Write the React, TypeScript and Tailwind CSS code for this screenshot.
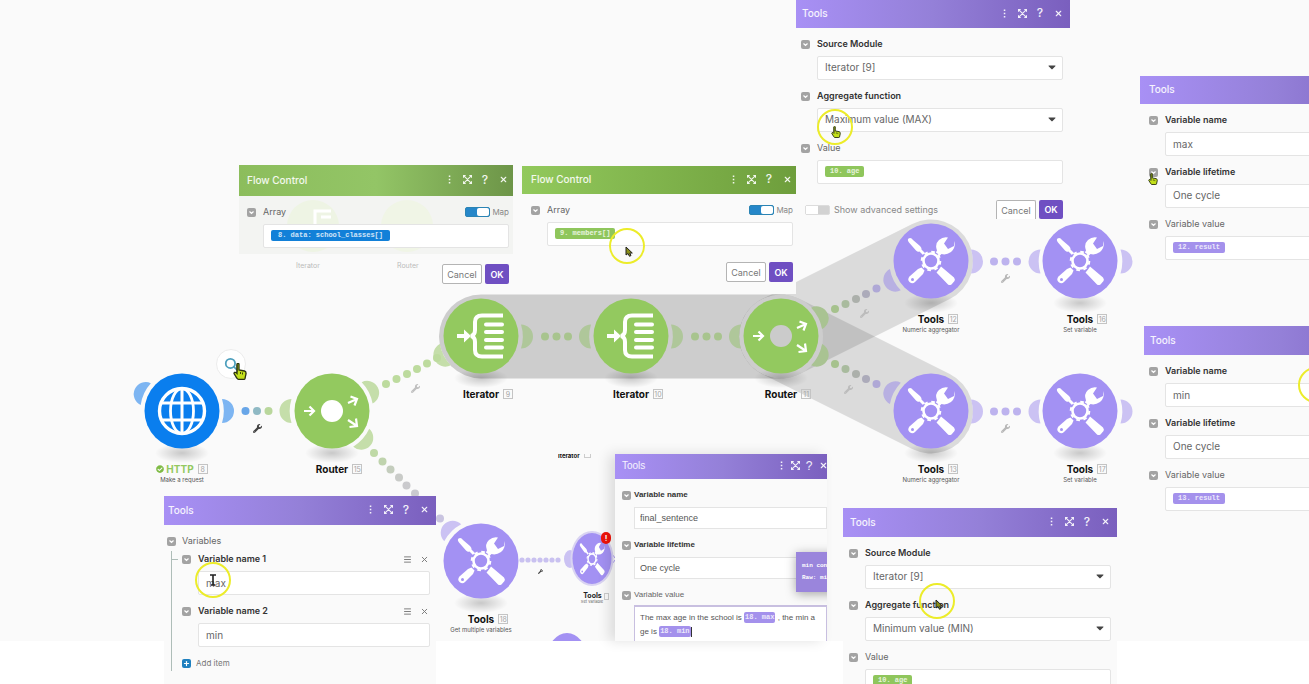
import React, { useId } from "react";
import { FaWrench, FaCheckCircle, FaCaretDown } from "react-icons/fa";
import { Search, X, Menu, Plus } from "lucide-react";

/* ---------- canvas drawings ---------- */

type Kind = "http" | "router" | "iterator" | "tools";

const GLOBE = "#0a7eee";
const GREEN = "#93c95f";
const PURPLE = "#a391f3";

function Glyph({ kind, hole = "#ffffff" }: { kind: Kind; hole?: string }) {
  if (kind === "http")
    return (
      <g fill="none" stroke="#fff" strokeWidth="3.4">
        <circle r="22.5" />
        <ellipse rx="11.5" ry="22.5" strokeWidth="2.8" />
        <path d="M0-22V22M-21-8H21M-21 9H21" strokeWidth="3" />
      </g>
    );
  if (kind === "router")
    return (
      <g fill="none" stroke="#fff" strokeWidth="2.2">
        <circle r="11" fill={hole} stroke="none" />
        <path d="M-28 0H-18M-22.500-4.500L-18 0L-22.500 4.500" />
        <path d="M16-8L25-12M18.500-14.500L25-12L22.500-5.500" />
        <path d="M16 9L25 15M24 7.500L25 15L17.500 16" />
      </g>
    );
  if (kind === "iterator")
    return (
      <g fill="none" stroke="#fff" strokeWidth="4">
        <path d="M22-20.500H1Q-6-20.500-6-14V-6Q-6-1-10 0Q-6 1-6 6V14Q-6 20.500 1 20.500H22" />
        <path d="M5-11.500H21M5-4H21M5 4H21M5 11.500H21" strokeLinecap="round" />
        <path d="M-24 0H-13" />
        <path d="M-17-6.500L-10 0L-17 6.500Z" fill="#fff" stroke="none" />
      </g>
    );
  return (
    <g fill="#fff">
      <path d="M-22.500-22.500Q-20-24-18-21L-11-15Q-9-13-9.500-11.500L-6-8L-8-6L-11.500-9.500Q-13-8.500-15-10.500L-22-18.500Q-24-21-22.500-22.500Z" />
      <path d="M17-23.500L13-17.500L17-12L23-15L23.500-20Q25-13 20-9Q15-5.500 10.500-7L8-4.500L4.500-8L6-10.500Q3.500-17 8-21Q12-24.500 17-23.500Z" />
      <path d="M10 5.500L23 16.500Q24.500 18.500 23.500 20L20.500 23.500Q18.500 24.500 17 23.500L5.500 11.500L8 8.500Z" />
      <path d="M-9.500 6.500L-6.500 9.500L-8 13L-16 21Q-18.500 23.500-21.500 21Q-24 18.500-21.500 15.500L-13 8Z" />
      <circle cx="-18.500" cy="18.500" r="1.500" fill={PURPLE} />
      <circle r="10" fill={PURPLE} />
      <circle r="7.500" fill="none" stroke="#fff" strokeWidth="2.600" />
      <circle r="9.300" fill="none" stroke="#fff" strokeWidth="2" strokeDasharray="3.650 3.650" />
    </g>
  );
}

type NodeProps = {
  place: string;
  kind: Kind;
  name: string;
  id: string;
  sub?: string;
  hole?: string;
};

function Module({ place, kind, name, id, sub, hole }: NodeProps) {
  const color = kind === "http" ? GLOBE : kind === "tools" ? PURPLE : GREEN;
  return (
    <div className={`absolute flex w-[76px] flex-col items-center ${place}`}>
      <svg viewBox="-38 -38 76 76" className="h-[76px] w-[76px] overflow-visible" aria-hidden="true">
        <defs>
          <radialGradient id={`sh${id}`}>
            <stop offset="0" stopColor="#000" stopOpacity=".2" />
            <stop offset="1" stopColor="#000" stopOpacity="0" />
          </radialGradient>
        </defs>
        <ellipse cy="42" rx="27" ry="10" fill={`url(#sh${id})`} />
        <circle r="37.5" fill={color} />
        <Glyph kind={kind} hole={hole} />
      </svg>
      <div
        className={`mt-[14px] flex h-3 items-center gap-1 whitespace-nowrap text-[10px] font-bold leading-3 ${
          kind === "http" ? "text-[#93c95f]" : "pl-[14px] text-[#111]"
        }`}
      >
        <span className="flex items-center gap-0.5">
          {kind === "http" && <FaCheckCircle size={8} color="#7fbb45" />}
          {name}
        </span>
        <span className="flex h-[10px] min-w-[10px] items-center justify-center border border-[#c4c4c4] text-[7px] font-normal leading-none text-[#a5a5a5]">
          {id}
        </span>
      </div>
      {sub && <div className="mt-px whitespace-nowrap text-[6px] leading-2 text-[#555]">{sub}</div>}
    </div>
  );
}

function Lobe({ x, y, a, fill }: { x: number; y: number; a: number; fill: string }) {
  return (
    <path
      d="M40-12A12 12 0 0 1 40 12A41 41 0 0 0 40-12Z"
      fill={fill}
      transform={`translate(${x} ${y}) rotate(${a})`}
    />
  );
}

const LB = "#7db5f2";
const LG = "#c5deaa";
const LP = "#cbc2f3";

const lobes: [number, number, number, string][] = [
  [182, 411, 205, LB],
  [182, 411, 0, LB],
  [331.5, 411, 180, LG],
  [331.5, 411, -27, LG],
  [331.5, 411, 42, LG],
  [481, 336.5, 153, LG],
  [481, 561, 225, LP],
  [931, 261.5, 0, LP],
  [931, 411.5, 0, LP],
  [1080.5, 261.5, 180, LP],
  [1080.5, 261.5, 0, LP],
  [1080.5, 411.5, 180, LP],
  [1080.5, 411.5, 0, LP],
];

const shaded: [number, number, number, string][] = [
  [481, 336.5, 0, "#afc79a"],
  [631, 336.5, 180, "#afc79a"],
  [631, 336.5, 0, "#afc79a"],
  [781, 336.5, 180, "#afc79a"],
  [781, 336.5, -27, "#a9c392"],
  [781, 336.5, 27, "#a9c392"],
  [931, 261.5, 153, "#b8b0e2"],
  [931, 411.5, 207, "#b8b0e2"],
];

const dots: [number, number, string][] = [
  [245.5, 411, "#68a6e8"],
  [257, 411, "#8fb9c4"],
  [268.5, 411, "#b9d79c"],
  [386, 384, "#bddb9e"],
  [396.5, 379, "#bddb9e"],
  [407, 374, "#bddb9e"],
  [417, 369, "#bddb9e"],
  [427, 363.5, "#bddb9e"],
  [437, 358, "#bddb9e"],
  [374, 453, "#bfd9a6"],
  [382.5, 461.5, "#bfd3ad"],
  [390.5, 469.5, "#c4cdbd"],
  [399, 477.5, "#c9cbc8"],
  [406.5, 485.5, "#cacacd"],
  [415, 493.5, "#cacacf"],
  [440, 518.5, "#c9c4e0"],
  [545, 336.5, "#a8c48e"],
  [556.5, 336.5, "#a8c48e"],
  [568, 336.5, "#a8c48e"],
  [695, 336.5, "#a8c48e"],
  [706.5, 336.5, "#a8c48e"],
  [718, 336.5, "#a8c48e"],
  [835, 309, "#a6c28d"],
  [845.5, 304, "#a9bb9e"],
  [856, 299, "#acb0ab"],
  [866, 294, "#acabba"],
  [876.5, 288.5, "#afa8d6"],
  [835, 364, "#a6c28d"],
  [845.5, 369, "#a9bb9e"],
  [856, 374, "#acb0ab"],
  [866, 379, "#acabba"],
  [876.5, 384, "#afa8d6"],
  [994, 261.5, "#bdb3ee"],
  [1005.5, 261.5, "#bdb3ee"],
  [1017, 261.5, "#bdb3ee"],
  [994, 411.5, "#bdb3ee"],
  [1005.5, 411.5, "#bdb3ee"],
  [1017, 411.5, "#bdb3ee"],
];

const smallDots = [522, 528, 534, 540, 546, 552, 558];

function Connections() {
  return (
    <svg className="absolute left-0 top-0 h-[641px] w-[1309px]" viewBox="0 0 1309 641" aria-hidden="true">
      <defs>
        <mask id="branch" maskUnits="userSpaceOnUse" x="0" y="0" width="1309" height="641">
          <rect width="1309" height="641" fill="#fff" />
          <circle cx="781" cy="336.500" r="42" fill="#000" />
        </mask>
      </defs>
      <g stroke="#000" strokeWidth="84" strokeLinecap="round">
        <path d="M481 336.500H781" strokeOpacity=".18" />
        <g mask="url(#branch)">
          <path d="M781 336.500L931 261.500" strokeOpacity=".12" />
          <path d="M781 336.500L931 411.500" strokeOpacity=".12" />
        </g>
      </g>
      {[...lobes, ...shaded].map(([x, y, a, f], i) => (
        <Lobe key={i} x={x} y={y} a={a} fill={f} />
      ))}
      {dots.map(([x, y, f], i) => (
        <circle key={i} cx={x} cy={y} r="4" fill={f} />
      ))}
      {smallDots.map((x) => (
        <circle key={x} cx={x} cy="560" r="2.6" fill="#c9c1f0" />
      ))}
      <ellipse cx="570" cy="559" rx="6" ry="9" fill={LP} />
      <path d="M611 553L616 559L611 565" fill="none" stroke={PURPLE} />
      <ellipse cx="592" cy="558.500" rx="21.500" ry="27.500" fill="#d9d3f2" />
      <ellipse cx="592" cy="558.500" rx="19.500" ry="25.500" fill={PURPLE} />
      <g transform="translate(592 559) scale(.53 .68)">
        <Glyph kind="tools" />
      </g>
      <ellipse cx="567" cy="659" rx="20" ry="26" fill={PURPLE} />
    </svg>
  );
}

/* ---------- pointers ---------- */

const Ring = ({ place }: { place: string }) => (
  <div className={`pointer-events-none absolute h-9 w-9 rounded-full border-2 border-[#ecec2a] ${place}`} />
);

const Hand = ({ place }: { place: string }) => (
  <svg viewBox="0 0 14 17" className={`pointer-events-none absolute ${place}`} aria-hidden="true">
    <path
      d="M4 1Q5-.2 6 1V7L11.500 8Q13.400 8.500 13 11L12 15.500Q11.800 16.300 11 16.300H5.500Q4.500 16.300 4 15.300L1 10.500Q1 8.800 3 9.500L4 10.500Z"
      fill="#c3e01a"
      stroke="#2c3310"
      strokeWidth="1.300"
    />
    <path d="M4 1.500V9M7.500 9V11M9.500 9.500V11.500" stroke="#2c3310" strokeWidth=".9" />
  </svg>
);

const Arrow = ({ place }: { place: string }) => (
  <svg viewBox="0 0 8 11" className={`pointer-events-none absolute h-[11px] w-2 ${place}`} aria-hidden="true">
    <path d="M1 1V9L3 7.500L4.500 10.300L6 9.500L4.800 7H7.300Z" fill="#8a8f18" stroke="#222" />
  </svg>
);

/* ---------- panel parts ---------- */

const Expand = ({ size }: { size: number }) => (
  <svg viewBox="0 0 10 10" width={size} height={size} fill="none" stroke="currentColor" strokeWidth="1.200">
    <path d="M.6 3V.6H3M7 .6H9.400V3M9.400 7V9.400H7M3 9.400H.6V7M1 1L9 9M9 1L1 9" />
  </svg>
);

const Dots = ({ size }: { size: number }) => (
  <svg viewBox="0 0 10 10" width={size} height={size} fill="currentColor">
    <path d="M4.200 .6h1.700v1.700H4.200zM4.200 4.200h1.700v1.700H4.200zM4.200 7.800h1.700v1.700H4.200z" />
  </svg>
);

type HeaderProps = { title: string; pad: string; tone: string; cell?: string; bare?: boolean };

function Header({ title, pad, tone, cell = "w-[18px]", bare }: HeaderProps) {
  const btn = `flex items-center justify-center ${cell}`;
  return (
    <header className={`flex items-center justify-between pb-0.5 text-white/90 ${pad} ${tone}`}>
      <h2 className="text-[10px] font-medium leading-4">{title}</h2>
      {!bare && (
        <div className="flex items-center">
          <button className={btn} aria-label="More"><Dots size={9} /></button>
          <button className={btn} aria-label="Expand"><Expand size={9} /></button>
          <button className={`${btn} text-[12px] font-medium leading-none`} aria-label="Help">?</button>
          <button className={btn} aria-label="Close"><X size={9} strokeWidth={3} /></button>
        </div>
      )}
    </header>
  );
}

const VIOLET = "bg-linear-to-r from-[#a890f5] via-[#9480d8] to-[#7a5fbe]";
const LEAF = "bg-linear-to-r from-[#92c95c] to-[#6e9e3c]";

const Tick = () => (
  <span className="flex h-[9px] w-[9px] shrink-0 items-center justify-center rounded-xs bg-[#a3a3a3]">
    <svg viewBox="0 0 7 7" className="h-[7px] w-[7px]" fill="none" stroke="#fff" strokeWidth="1.200" aria-hidden="true">
      <path d="M1.500 2.500L3.500 4.500L5.500 2.500" />
    </svg>
  </span>
);

const Chip = ({ children, tone, pad = "px-[5px]" }: { children: React.ReactNode; tone: string; pad?: string }) => (
  <span
    className={`inline-flex h-[11px] items-center rounded-xs align-middle font-['Liberation_Mono',monospace] text-[7px] font-bold leading-none whitespace-pre text-white/80 ${pad} ${tone}`}
  >
    {children}
  </span>
);

const BOX = "h-6 w-full rounded-xs border border-[#e4e4e4] bg-white px-[7px] pb-px text-[10px] text-[#666] outline-none";

type FieldProps = {
  label: string;
  strong?: boolean;
  side?: React.ReactNode;
  value?: string;
  options?: string[];
  chip?: React.ReactNode;
  box?: string;
  gap?: string;
};

function Field({ label, strong, side, value, options, chip, box = BOX, gap = "gap-x-[7px]" }: FieldProps) {
  const id = useId();
  return (
    <div className={`grid grid-cols-[9px_1fr] items-center gap-y-1 ${gap}`}>
      <Tick />
      <div className="flex h-4 items-center justify-between">
        <label
          id={`${id}l`}
          htmlFor={chip ? undefined : id}
          className={`whitespace-nowrap leading-4 ${strong ? "font-semibold text-[#333]" : "text-[#666]"}`}
        >
          {label}
        </label>
        {side}
      </div>
      <div className="relative col-start-2">
        {chip ? (
          <div role="textbox" aria-labelledby={`${id}l`} className={`flex items-center ${box}`}>
            {chip}
          </div>
        ) : options ? (
          <>
            <select id={id} className={`appearance-none ${box}`}>
              {options.map((o) => (
                <option key={o}>{o}</option>
              ))}
            </select>
            <FaCaretDown size={12} color="#444" className="pointer-events-none absolute right-[5px] top-[5px]" />
          </>
        ) : (
          <input id={id} defaultValue={value} className={box} />
        )}
      </div>
    </div>
  );
}

function MapToggle() {
  return (
    <label className="flex items-center gap-0.5 text-[8px] text-[#888]">
      <input type="checkbox" defaultChecked className="peer sr-only" />
      <span className="flex h-[10px] w-[25px] justify-end rounded-xs border border-[#2b84b4] bg-[#2687c9]">
        <span className="h-2 w-3 rounded-xs bg-white" />
      </span>
      Map
    </label>
  );
}

function Actions({ cut }: { cut?: boolean }) {
  return (
    <div className="flex justify-end gap-[3px] text-[9px] leading-none">
      <button
        className={`w-10 rounded-xs border border-[#b4b4b4] bg-white text-[#777] ${cut ? "h-[19px] rounded-b-none border-b-0" : "h-5"}`}
      >
        Cancel
      </button>
      <button className={`w-6 rounded-xs bg-[#6f4fc2] font-semibold text-white ${cut ? "h-[19px]" : "h-5"}`}>OK</button>
    </div>
  );
}

const RowTools = () => (
  <span className="flex items-center gap-2 pr-px text-[#777]">
    <button aria-label="Reorder"><Menu size={9} strokeWidth={2.5} /></button>
    <button aria-label="Remove"><X size={9} strokeWidth={2.5} /></button>
  </span>
);

const PANEL = "absolute flex flex-col bg-[#fafafa] text-[9px]";
const GCHIP = "bg-[#8fc65c]";
const PCHIP = "bg-[#a491ec]";
const NARROW =
  "h-[22px] w-full border border-[#e4e4e4] bg-white px-[5px] text-[9px] text-[#555] outline-none";

export default function App() {
  return (
    <main className="relative h-screen overflow-hidden bg-white font-['Inter','Liberation_Sans',sans-serif]">
      <section aria-label="Scenario" className="relative h-[641px] overflow-hidden bg-[#fafafa]">
        <Connections />
        <Module place="left-[144px] top-[373px]" kind="http" name="HTTP" id="8" sub="Make a request" />
        <Module place="left-[294px] top-[373px]" kind="router" name="Router" id="15" />
        <Module place="left-[443px] top-[298px]" kind="iterator" name="Iterator" id="9" />
        <Module place="left-[593px] top-[298px]" kind="iterator" name="Iterator" id="10" />
        <Module place="left-[743px] top-[298px]" kind="router" name="Router" id="11" hole="#cbcbcb" />
        <Module place="left-[893px] top-[223px]" kind="tools" name="Tools" id="12" sub="Numeric aggregator" />
        <Module place="left-[893px] top-[373px]" kind="tools" name="Tools" id="13" sub="Numeric aggregator" />
        <Module place="left-[1042px] top-[223px]" kind="tools" name="Tools" id="16" sub="Set variable" />
        <Module place="left-[1042px] top-[373px]" kind="tools" name="Tools" id="17" sub="Set variable" />
        <Module place="left-[443px] top-[523px]" kind="tools" name="Tools" id="18" sub="Get multiple variables" />

        <div className="absolute left-[572px] top-[592px] flex w-[40px] flex-col items-center">
          <span className="flex items-center gap-0.5 pl-2 text-[7px] font-bold leading-2 text-[#222]">
            Tools
            <span className="h-[7px] w-[5px] border border-[#ccc]" />
          </span>
          <span className="whitespace-nowrap text-[4px] leading-1 text-[#666]">Set variable</span>
        </div>
        <div className="absolute left-[601px] top-[532px] flex h-3 w-[10px] items-center justify-center rounded-full bg-[#f0140a] text-[8px] font-bold text-white">
          !
        </div>
        <div className="absolute left-[558px] top-[454px] flex h-1 items-end gap-1 overflow-hidden text-[6px] font-bold leading-[5px] text-[#111]">
          Iterator
          <span className="h-1 w-[7px] border border-t-0 border-[#ccc]" />
        </div>

        <FaWrench size={9} color="#444" className="absolute left-[253px] top-[424px]" />
        <FaWrench size={9} color="#c0c0c0" className="absolute left-[411px] top-[384px]" />
        <FaWrench size={9} color="#bcbcbc" className="absolute left-[860px] top-[309px]" />
        <FaWrench size={9} color="#bcbcbc" className="absolute left-[844px] top-[385px]" />
        <FaWrench size={9} color="#b8b8b8" className="absolute left-[1001px] top-[274px]" />
        <FaWrench size={9} color="#b8b8b8" className="absolute left-[1001px] top-[424px]" />
        <FaWrench size={5} color="#444" className="absolute left-[538px] top-[569px]" />

        <button
          aria-label="Inspect"
          className="absolute left-[216px] top-[349px] flex h-[30px] w-[30px] items-center justify-center rounded-full border border-[#ececec] bg-white text-[#4d9fbd]"
        >
          <Search size={14} strokeWidth={3} />
        </button>
        <Hand place="left-[233px] top-[363px] h-[17px] w-[14px]" />
      </section>

      {/* Flow Control: school classes */}
      <section className={`${PANEL} left-[239px] top-[165px] w-[274px]`}>
        <Header
          title="Flow Control"
          pad="h-[31px] pl-2 pr-px"
          tone="bg-linear-to-r from-[#8cbd5c] via-[#93c566] to-[#6d9548]"
        />
        <div className="relative bg-[#f3f4f2] pb-1.5 pl-2 pr-1 pt-2">
          <svg viewBox="0 0 274 58" className="absolute inset-0 h-[58px] w-[274px]" aria-hidden="true">
            <circle cx="74" cy="30" r="26" fill="#eef4e4" />
            <circle cx="168" cy="30" r="26" fill="#f0f5e6" />
            <path d="M92 15H76V28M82 21H92" fill="none" stroke="#fff" strokeWidth="3" />
          </svg>
          <div className="relative">
            <Field label="Array" side={<MapToggle />} chip={<Chip tone="bg-[#1280d8]" pad="px-[7px]">8. data: school_classes[]</Chip>} />
          </div>
        </div>
        <div className="relative pb-1.5 pr-1 pt-[10px]">
          <Actions />
          <span className="absolute left-[57px] top-2 text-[7px] leading-2 text-[#bbb]">Iterator</span>
          <span className="absolute left-[158px] top-2 text-[7px] leading-2 text-[#bbb]">Router</span>
        </div>
      </section>

      {/* Flow Control: members */}
      <section className={`${PANEL} left-[522px] top-[166px] w-[274px]`}>
        <Header title="Flow Control" pad="h-7 pl-[9px]" tone={LEAF} />
        <div className="flex flex-col gap-4 pb-3 pl-[9px] pr-[3px] pt-2">
          <Field label="Array" side={<MapToggle />} chip={<Chip tone={GCHIP}>9. members[]</Chip>} />
          <Actions />
        </div>
      </section>

      {/* Maximum aggregator */}
      <section className={`${PANEL} left-[796px] top-0 w-[274px]`}>
        <Header title="Tools" pad="h-7 pl-1.5 pr-[3px]" tone={VIOLET} />
        <div className="flex flex-col gap-2 pl-[5px] pr-[7px] pt-2">
          <Field label="Source Module" strong options={["Iterator [9]"]} />
          <Field label="Aggregate function" strong options={["Maximum value (MAX)"]} />
          <Field label="Value" chip={<Chip tone={GCHIP}>10. age</Chip>} />
          <div className="mt-2 flex items-center justify-between pl-1">
            <label className="flex items-center gap-1 text-[9px] text-[#888]">
              <input type="checkbox" className="sr-only" />
              <span className="flex h-[10px] w-[25px] rounded-xs border border-[#dcdcdc] bg-[#d2d2d2]">
                <span className="h-2 w-3 bg-white" />
              </span>
              Show advanced settings
            </label>
            <Actions cut />
          </div>
        </div>
      </section>

      {/* Set variable: max */}
      <section className={`${PANEL} left-[1140px] top-[76px] w-[274px] pb-4`}>
        <Header title="Tools" pad="h-7 pl-[9px]" tone={VIOLET} bare />
        <div className="flex flex-col gap-2 pl-[9px] pt-2">
          <Field label="Variable name" strong value="max" />
          <Field label="Variable lifetime" strong options={["One cycle"]} />
          <Field label="Variable value" chip={<Chip tone={PCHIP}>12. result</Chip>} />
        </div>
      </section>

      {/* Set variable: min */}
      <section className={`${PANEL} left-[1144px] top-[326px] w-[274px] pb-4`}>
        <Header title="Tools" pad="h-[29px] pl-1.5" tone={VIOLET} bare />
        <div className="flex flex-col gap-2 pl-[5px] pt-2">
          <Field label="Variable name" strong value="min" />
          <Field label="Variable lifetime" strong options={["One cycle"]} />
          <Field label="Variable value" chip={<Chip tone={PCHIP}>13. result</Chip>} />
        </div>
      </section>

      {/* Get multiple variables */}
      <section className={`${PANEL} left-[164px] top-[496px] w-[272px] pb-4`}>
        <Header title="Tools" pad="h-[29px] pl-1 pr-[3px]" tone={VIOLET} />
        <div className="pl-[3px] pr-1.5 pt-2">
          <div className="flex h-4 items-center gap-1.5 text-[#666]">
            <Tick />
            Variables
          </div>
          <div className="ml-1 mt-0.5 flex flex-col gap-2 border-l border-[#aebdb8] pl-[10px]">
            <div className="relative">
              <span className="absolute -left-[10px] top-2 h-px w-1.5 bg-[#aebdb8]" />
              <Field label="Variable name 1" strong value="max" side={<RowTools />} />
            </div>
            <Field label="Variable name 2" strong value="min" side={<RowTools />} />
            <button className="flex h-4 items-center gap-[5px] text-[8px] text-[#777]">
              <span className="flex h-[9px] w-[9px] items-center justify-center rounded-xs bg-[#1f80bf] text-white">
                <Plus size={7} strokeWidth={4} />
              </span>
              Add item
            </button>
          </div>
        </div>
      </section>

      {/* Set variable: final sentence */}
      <section className="absolute left-[615px] top-[454px] flex h-[187px] w-[212px] flex-col overflow-hidden bg-[#fafafa] font-['Liberation_Sans',sans-serif] text-[8px] shadow-[-6px_0_12px_rgba(0,0,0,0.12)]">
        <Header title="Tools" pad="h-[25px] shrink-0 pl-[7px] -mr-[3px]" tone={VIOLET} cell="w-[14px]" />
        <div className="flex flex-col gap-2 pl-[7px] pt-2">
          <Field label="Variable name" strong value="final_sentence" box={NARROW} gap="gap-x-[3px]" />
          <Field label="Variable lifetime" strong value="One cycle" box={NARROW} gap="gap-x-[3px]" />
          <div className="grid grid-cols-[9px_1fr] items-center gap-x-[3px]">
            <Tick />
            <span id="sentence" className="leading-4 text-[#666]">Variable value</span>
            <div
              role="textbox"
              aria-labelledby="sentence"
              className="col-start-2 mt-0.5 h-12 whitespace-nowrap border border-t-2 border-[#c8bfe0] bg-white px-[5px] pt-1 text-[8px] leading-[14px] text-[#555]"
            >
              The max age in the school is <Chip tone={PCHIP} pad="px-px">18. max</Chip> , the min a
              <br />
              ge is <Chip tone={PCHIP} pad="px-px">18. min</Chip>
              <span className="inline-block h-[10px] w-px bg-[#333] align-middle" />
            </div>
          </div>
        </div>
        <div className="absolute left-[181px] top-[98px] flex h-10 w-12 flex-col justify-center bg-[#9a85dc] pl-1.5 font-['Liberation_Mono',monospace] text-[6px] font-bold leading-3 whitespace-nowrap text-white shadow-[0_2px_10px_rgba(0,0,0,0.35)]">
          <span>min con</span>
          <span>Raw: min</span>
        </div>
      </section>

      {/* Minimum aggregator */}
      <section className={`${PANEL} left-[843px] top-[508px] w-[274px]`}>
        <Header title="Tools" pad="h-[29px] pl-[7px] pr-[3px]" tone={VIOLET} />
        <div className="flex flex-col gap-2 pl-1.5 pr-[6px] pt-2">
          <Field label="Source Module" strong options={["Iterator [9]"]} />
          <Field label="Aggregate function" strong options={["Minimum value (MIN)"]} />
          <Field label="Value" chip={<Chip tone={GCHIP}>10. age</Chip>} />
        </div>
      </section>

      <Ring place="left-[609px] top-[228px]" />
      <Arrow place="left-[625px] top-[246px]" />
      <Ring place="left-[817px] top-[109px]" />
      <Hand place="left-[831px] top-[126px] h-3 w-[10px]" />
      <Hand place="left-[1148px] top-[173px] h-3 w-[10px]" />
      <Ring place="left-[1298px] top-[367px]" />
      <Ring place="left-[195px] top-[562px]" />
      <svg viewBox="0 0 8 12" className="pointer-events-none absolute left-[209px] top-[574px] h-3 w-2" aria-hidden="true">
        <path d="M1 1H7M4 1V11M2 11H6" stroke="#222" strokeWidth="1.600" />
      </svg>
      <Ring place="left-[919px] top-[583px]" />
      <Arrow place="left-[935px] top-[599px]" />
    </main>
  );
}
